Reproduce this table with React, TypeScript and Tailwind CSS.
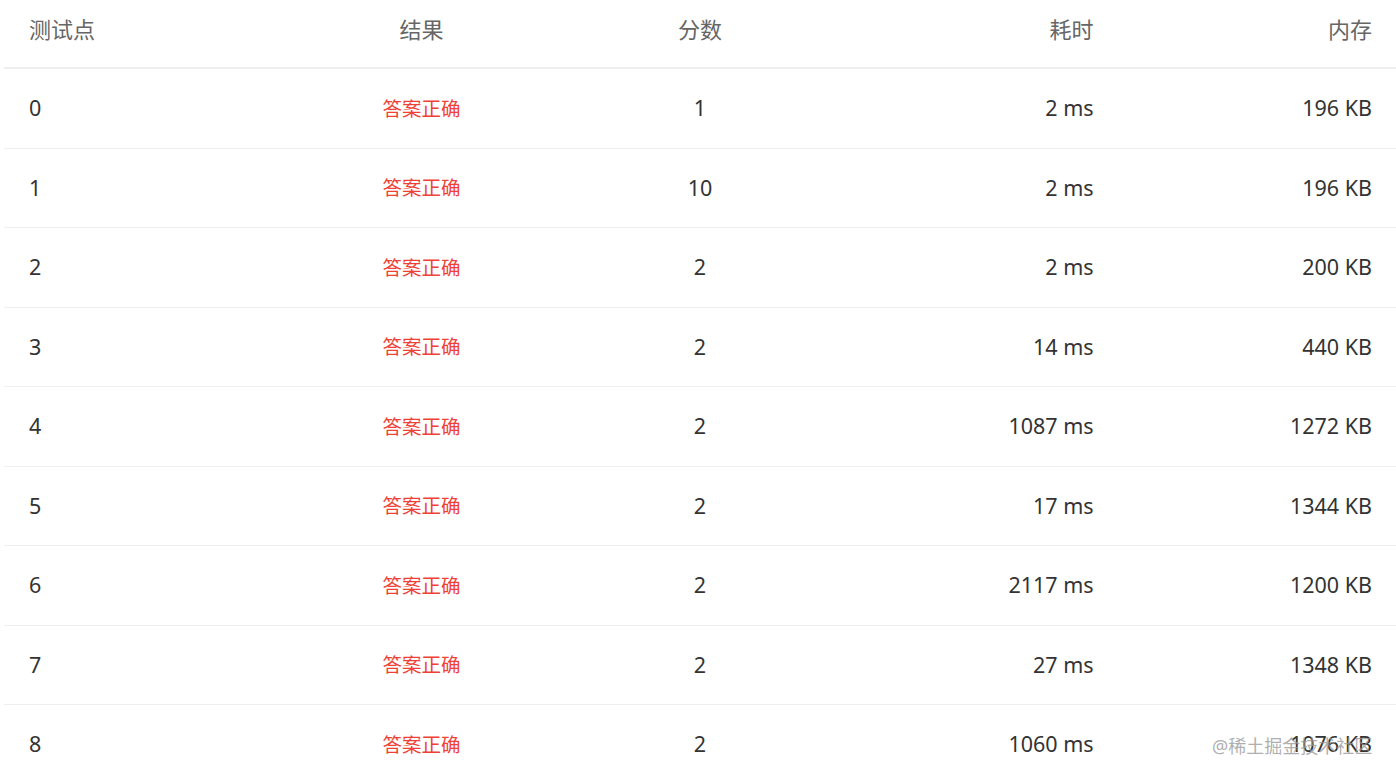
const rows = [
  { id: 0, score: 1, time: '2 ms', mem: '196 KB' },
  { id: 1, score: 10, time: '2 ms', mem: '196 KB' },
  { id: 2, score: 2, time: '2 ms', mem: '200 KB' },
  { id: 3, score: 2, time: '14 ms', mem: '440 KB' },
  { id: 4, score: 2, time: '1087 ms', mem: '1272 KB' },
  { id: 5, score: 2, time: '17 ms', mem: '1344 KB' },
  { id: 6, score: 2, time: '2117 ms', mem: '1200 KB' },
  { id: 7, score: 2, time: '27 ms', mem: '1348 KB' },
  { id: 8, score: 2, time: '1060 ms', mem: '1076 KB' },
];

const font = { fontFamily: '"Noto Sans", "Noto Sans CJK SC", sans-serif' };

const App = () => {
  return (
    <div className="relative h-[784px] w-[1396px] overflow-hidden bg-white pl-[4px]" style={font}>
      <div className="grid h-[69px] grid-cols-5 items-center border-b-2 border-[#eeeeee] pb-[9px] text-[22px] text-[#666666]">
        <div className="px-[25px]">测试点</div>
        <div className="text-center">结果</div>
        <div className="text-center">分数</div>
        <div className="px-[24px] text-right">耗时</div>
        <div className="px-[24px] text-right">内存</div>
      </div>

      {rows.map(row => (
        <div
          key={row.id}
          className="grid h-[79.5px] grid-cols-5 items-center border-b border-[#efefef] text-[21.5px] text-[#333333]"
        >
          <div className="px-[25px]">{row.id}</div>
          <div className="text-center text-[19.5px] text-[#ef4136]">答案正确</div>
          <div className="text-center">{row.score}</div>
          <div className="px-[24px] text-right">{row.time}</div>
          <div className="px-[24px] text-right">{row.mem}</div>
        </div>
      ))}

      {/* watermark */}
      <div className="pointer-events-none absolute left-[1212px] top-[733px] text-[18px] text-[#999999]/80">
        @稀土掘金技术社区
      </div>
    </div>
  );
};

export default App;
